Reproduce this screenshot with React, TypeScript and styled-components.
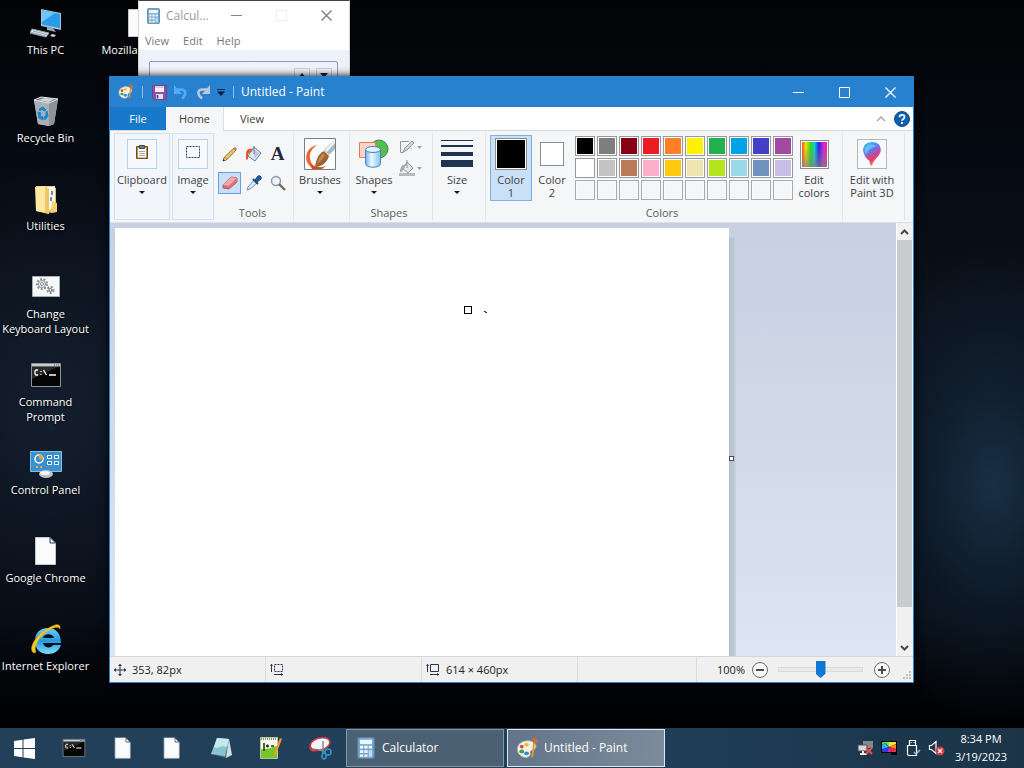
import React from 'react';
import styled, { createGlobalStyle, css } from 'styled-components';

const GlobalStyle = createGlobalStyle`
  *, *::before, *::after { box-sizing: border-box; }
  html, body { margin: 0; padding: 0; }
  body {
    font-family: "Open Sans", "Noto Sans", sans-serif;
    font-size: 12px;
    line-height: 16px;
    color: #1b1b1b;
    overflow: hidden;
  }
  button {
    font: inherit;
    color: inherit;
    margin: 0;
    padding: 0;
    border: 0;
    background: none;
  }
  svg { display: block; flex: none; }
`;

/* ---------- desktop ---------- */

const Screen = styled.div`
  display: flex;
  flex-direction: column;
  height: 100vh;
  background:
    radial-gradient(ellipse 150px 240px at 97% 63%, #182f45 0%, rgba(20, 38, 56, 0.5) 50%, transparent 100%),
    radial-gradient(ellipse 190px 250px at 5% 54%, #141f2f 0%, rgba(17, 26, 40, 0.6) 50%, transparent 100%),
    linear-gradient(#020305 0%, #060a12 20%, #0b121c 45%, #060b13 80%, #010204 92%);
`;

const Desktop = styled.main`
  position: relative;
  flex: 1;
  min-height: 0;
`;

const IconGrid = styled.div`
  display: grid;
  grid-auto-flow: column;
  grid-template-rows: repeat(8, 88px);
  grid-auto-columns: 91px;
  column-gap: 2px;
  justify-content: start;
`;

const Shortcut = styled.button`
  display: flex;
  flex-direction: column;
  align-items: center;
  justify-content: flex-start;
  padding-top: 7px;
  gap: 3px;
  font-size: 11px;
  line-height: 15px;
  color: #fff;
  text-shadow: 0 1px 2px #000;
  white-space: pre;
`;

const WindowFrame = styled.section`
  position: absolute;
  display: flex;
  flex-direction: column;
  background: #fff;
`;

/* ---------- calculator ---------- */

const CalcWindow = styled(WindowFrame)`
  left: 138px;
  top: 0;
  width: 212px;
  height: 240px;
  border: 1px solid #d5d5d5;
  border-top-color: #444;
  color: #777;
`;

const CalcTitle = styled.header`
  display: flex;
  align-items: center;
  height: 29px;
  padding-left: 8px;
`;

const CalcName = styled.h2`
  flex: 1;
  margin: 0 0 0 6px;
  font-size: 12px;
  font-weight: 400;
  color: #999;
`;

const CalcControls = styled.div`
  display: flex;
  button {
    display: grid;
    place-items: center;
    width: 45px;
    height: 28px;
  }
`;

const CalcMenu = styled.nav`
  display: flex;
  gap: 14px;
  height: 20px;
  padding-left: 6px;
  font-size: 11px;
  line-height: 22px;
`;

const CalcBody = styled.div`
  flex: 1;
  padding: 11px 11px 11px 10px;
  background: linear-gradient(#edf2fa, #dde7f3);
`;

const CalcDisplay = styled.div`
  display: flex;
  justify-content: flex-end;
  gap: 6px;
  height: 50px;
  padding: 6px 5px 0;
  border: 1px solid #8e9cb5;
  border-radius: 2px;
  background: linear-gradient(#eef3fb, #fff);
  button {
    display: grid;
    place-items: center;
    width: 16px;
    height: 14px;
    border: 1px solid #ccd4e2;
  }
`;

/* ---------- paint ---------- */

const PaintWindow = styled(WindowFrame)`
  left: 109px;
  right: 110px;
  top: 76px;
  bottom: 45px;
  border: 1px solid #2781cf;
  box-shadow: 0 0 8px #000;
  font-size: 11px;
`;

const TitleBar = styled.header`
  display: flex;
  align-items: center;
  height: 30px;
  flex: none;
  padding-left: 8px;
  background: #2781cf;
  color: #fff;
`;

const QuickAccess = styled.div`
  display: flex;
  align-items: center;
  gap: 6px;
`;

const BarRule = styled.span`
  width: 1px;
  height: 12px;
  margin: 0 3px 0 2px;
  background: #8cbde8;
`;

const PaintName = styled.h1`
  flex: 1;
  margin: 0 0 0 4px;
  font-size: 12px;
  font-weight: 400;
`;

const WindowControls = styled.div`
  display: flex;
  button {
    display: grid;
    place-items: center;
    width: 46px;
    height: 28px;
  }
`;

const TabRow = styled.nav`
  display: flex;
  flex: none;
  height: 24px;
  border-bottom: 1px solid #d6d9dc;
`;

const Tab = styled.button<{ $kind?: 'file' | 'active' }>`
  width: 56px;
  height: 24px;
  line-height: 24px;
  color: #3b3b3b;
  ${p => p.$kind === 'file' && css`
    height: 23px;
    background: #1878ca;
    color: #fff;
  `}
  ${p => p.$kind === 'active' && css`
    width: 58px;
    background: #f5f6f7;
    border-right: 1px solid #dcdfe2;
  `}
`;

const TabTools = styled.div`
  display: flex;
  align-items: center;
  gap: 8px;
  margin-left: auto;
  padding-right: 3px;
`;

const Ribbon = styled.div`
  display: flex;
  flex: none;
  height: 92px;
  padding: 2px 4px;
  background: #f5f6f7;
  border-bottom: 1px solid #dcdfe6;
  color: #3f4043;
`;

const Group = styled.div<{ $width: number }>`
  display: flex;
  flex-direction: column;
  flex: none;
  width: ${p => p.$width}px;
  border-right: 1px solid #e1e4e7;
`;

const GroupBody = styled.div<{ $inset?: number }>`
  display: flex;
  flex: 1;
  padding: 4px 0 0 ${p => p.$inset ?? 0}px;
`;

const GroupName = styled.div`
  height: 14px;
  line-height: 14px;
  padding-right: 4px;
  text-align: center;
  color: #5a5d61;
`;

const BigButton = styled.button<{ $width?: number; $collapsed?: boolean; $pressed?: boolean }>`
  display: flex;
  flex-direction: column;
  align-items: center;
  justify-content: flex-start;
  flex: none;
  width: ${p => p.$width ?? 52}px;
  line-height: 13px;
  white-space: nowrap;
  ${p => p.$collapsed && css`
    height: 87px;
    margin-right: 2px;
    padding-top: 3px;
    border: 1px solid #cddff0;
    background: #f2f6fb;
  `}
  ${p => p.$pressed && css`
    height: 66px;
    margin-top: -2px;
    padding-top: 1px;
    border: 1px solid #7fb0e0;
    background: #c9e0f7;
  `}
`;

const IconSlot = styled.span`
  display: grid;
  place-items: center;
  height: 34px;
  margin-bottom: 2px;
`;

const FramedIcon = styled.span<{ $tone?: string; $raised?: boolean }>`
  display: grid;
  place-items: center;
  width: 30px;
  height: 30px;
  padding-bottom: ${p => (p.$raised ? 5 : 0)}px;
  border: 1px solid ${p => p.$tone ?? '#b5d3ee'};
  background: #f7f9fc;
`;

const Caret = styled.span`
  width: 0;
  height: 0;
  margin-top: 5px;
  border: 3px solid transparent;
  border-top-color: #1b1b1b;
  border-bottom: 0;
`;

const ToolGrid = styled.div`
  display: grid;
  grid-template-columns: repeat(3, 23px);
  grid-auto-rows: 22px;
  align-content: start;
  gap: 7px 1px;
  padding-top: 6px;
`;

const ToolButton = styled.button<{ $on?: boolean }>`
  display: grid;
  place-items: center;
  border: 1px solid ${p => (p.$on ? '#62a2e4' : 'transparent')};
  background: ${p => (p.$on ? '#c9e0f7' : 'transparent')};
`;

const SideTools = styled.div`
  display: flex;
  flex-direction: column;
  gap: 5px;
  padding: 2px 0 0 1px;
`;

const SideTool = styled.button`
  display: flex;
  align-items: center;
  gap: 2px;
`;

const ColorWell = styled.span<{ $size: number; $fill: string }>`
  width: ${p => p.$size}px;
  height: ${p => p.$size}px;
  border: 1px solid #8a8d90;
  background: ${p => p.$fill};
  box-shadow: inset 0 0 0 1px #fff;
`;

const Palette = styled.div`
  display: grid;
  grid-template-columns: repeat(10, 20px);
  grid-auto-rows: 20px;
  gap: 2px;
  margin: -1px 3px 0;
  align-content: start;
`;

const Swatch = styled.button<{ $fill?: string }>`
  border: 1px solid ${p => (p.$fill ? '#97999b' : '#a8aaac')};
  background: ${p => p.$fill ?? '#f5f6f7'};
  box-shadow: inset 0 0 0 1px ${p => (p.$fill ? '#fff' : '#f8f9fa')};
`;

const Rainbow = styled.span`
  width: 29px;
  height: 29px;
  border: 1px solid #8a8d90;
  background:
    linear-gradient(rgba(128, 128, 128, 0) 20%, rgba(128, 128, 128, 0.75)),
    linear-gradient(90deg, #f22, #fd0 17%, #2d2 36%, #1cc 50%, #22e 66%, #d2d 84%, #f26);
  box-shadow: inset 0 0 0 1px #fff;
`;

const Workspace = styled.div`
  display: flex;
  flex: 1;
  min-height: 0;
`;

const Viewport = styled.div`
  display: flex;
  align-items: flex-start;
  flex: 1;
  min-width: 0;
  overflow: hidden;
  padding: 5px 0 0 5px;
  background: linear-gradient(#c7cfe0, #dce5f2);
`;

const Sheet = styled.div`
  position: relative;
  flex: none;
  width: 614px;
  height: 460px;
  background: #fff;
`;

const SheetEdge = styled.div`
  display: flex;
  align-items: center;
  width: 7px;
  height: 450px;
  margin-top: 10px;
  padding-bottom: 9px;
  background: linear-gradient(90deg, #b3bfcc, #bcc7d6 60%, #c9d2e1);
`;

const Handle = styled.span`
  width: 5px;
  height: 5px;
  border: 1px solid #444b5c;
  background: #fff;
`;

const EraserCursor = styled.span`
  position: absolute;
  left: 349px;
  top: 78px;
  width: 8px;
  height: 8px;
  border: 1px solid #000;
  background: #fff;
`;

const PenMark = styled.svg`
  position: absolute;
  left: 369px;
  top: 83px;
`;

const ScrollBar = styled.div`
  display: flex;
  flex-direction: column;
  width: 17px;
  padding-right: 1px;
  border-left: 1px solid #fff;
  background: #f0f0f0;
  button {
    display: grid;
    place-items: center;
    height: 17px;
  }
`;

const ScrollTrack = styled.div`
  flex: 1;
`;

const ScrollThumb = styled.div`
  height: 92%;
  background: #cacbcc;
`;

const StatusBar = styled.footer`
  display: flex;
  flex: none;
  height: 26px;
  border-top: 1px solid #d4d6d9;
  background: #f0f0f0;
  color: #222;
`;

const StatusCell = styled.div<{ $width: number }>`
  display: flex;
  align-items: center;
  gap: 6px;
  flex: 0 1 ${p => p.$width}px;
  padding-left: 4px;
  border-right: 1px solid #dadcde;
`;

const ZoomCell = styled.div`
  display: flex;
  align-items: center;
  flex: 1;
  justify-content: flex-end;
  gap: 7px;
`;

const ZoomRange = styled.input`
  appearance: none;
  width: 85px;
  height: 20px;
  margin: 0 4px 0 3px;
  background: transparent;
  &::-webkit-slider-runnable-track {
    height: 5px;
    border: 1px solid #d8dadc;
    background: #e9eaeb;
  }
  &::-webkit-slider-thumb {
    appearance: none;
    width: 10px;
    height: 17px;
    margin-top: -7px;
    background: #0f78d4;
    clip-path: polygon(0 0, 100% 0, 100% 75%, 50% 100%, 0 75%);
  }
`;

const Grip = styled.svg`
  align-self: flex-end;
  margin: 0 1px 2px 6px;
`;

/* ---------- taskbar ---------- */

const Taskbar = styled.footer`
  display: flex;
  flex: none;
  height: 40px;
  background: linear-gradient(90deg, #22405a, #203f5a 60%, #1b3447);
  color: #fff;
`;

const Launcher = styled.button<{ $width?: number }>`
  display: grid;
  place-items: center;
  width: ${p => p.$width ?? 49}px;
`;

const TaskButton = styled.button<{ $active?: boolean }>`
  display: flex;
  align-items: center;
  gap: 5px;
  flex: 0 1 158px;
  margin: 1px 3px 1px 0;
  padding-left: 8px;
  border: 1px solid ${p => (p.$active ? '#dfe6ec' : '#8496a5')};
  background: ${p => (p.$active ? 'linear-gradient(100deg, #62748a, #7d8c9b)' : '#4b6073')};
`;

const Tray = styled.div`
  display: flex;
  align-items: center;
  gap: 7px;
  margin-left: auto;
`;

const Clock = styled.time`
  width: 58px;
  margin-right: 14px;
  font-size: 11px;
  line-height: 18px;
  text-align: center;
`;

/* ---------- drawings ---------- */

const PcIcon = () => (
  <svg width="32" height="32" viewBox="0 0 32 32">
    <path d="M11 2 31 6v17l-20-4z" fill="#9fc4dd" />
    <path d="M12 3.500 30 7v14L12 17.500z" fill="#2a9be8" />
    <path d="M12 3.500 25 6 12 15z" fill="#6cc5f7" />
    <path d="m17 20 6 1 3 4-9-2z" fill="#93a9b8" />
    <path d="m2 22 17 4-3 4-16-4z" fill="#dfe5ea" stroke="#95a3ae" />
    <path d="m3 24 14 3.500M1.500 25.500 15.500 29" stroke="#9aa7b2" />
    <path d="m22 27 4 1-2 2-4-1z" fill="#cfd8df" />
  </svg>
);

const BinIcon = () => (
  <svg width="32" height="32" viewBox="0 0 32 32">
    <path d="M4 5 11 2l17 2-4 25-5 2-11-2z" fill="#b9c0c5" />
    <path d="m19 8 9-4-4 25-5 2z" fill="#8b9399" />
    <path d="m4 5 15 3v23L8 29z" fill="#a9b0b5" />
    <path d="M4 5 11 2l17 2-9 4z" fill="#727a80" stroke="#e0e4e6" />
    <path d="m8 5 7-2 9 1-5 3z" fill="#d4d6d7" />
    <path d="m9 14 4-2 3 3-2 1-2-2-2 2zM8 17l3 1-1 3 3 1v3l-4-2zM17 16l1 5-3 4-1-3 2-1v-4z" fill="#1686d2" stroke="#1686d2" />
  </svg>
);

const FolderIcon = () => (
  <svg width="32" height="32" viewBox="0 0 32 32">
    <path d="M6 3h14l6 2v24l-8 1-12-2z" fill="#e6bd59" />
    <path d="m16 4 9-1v18l-7 8z" fill="#f8f9f5" />
    <path d="M21 8h2v4h-2zM20 14h2v4h-2z" fill="#75919e" />
    <path d="M5 4 15 3l4 3v25L6 28z" fill="#ffe8a0" />
    <path d="M15 4v26l4 1V6z" fill="#edc76c" />
    <path d="m22 18 5 2v9l-6 1z" fill="#f5d070" />
  </svg>
);

const GearGlyph = ({ x, y, r }: { x: number; y: number; r: number }) => (
  <g transform={`translate(${x} ${y})`} fill="none" stroke="#8a8f93">
    <circle r={r} strokeDasharray="2 1.500" strokeWidth="2" />
    <circle r={r - 1.5} />
    <circle r="1.500" />
  </g>
);

const KeyboardLayoutIcon = () => (
  <svg width="32" height="32" viewBox="0 0 32 32">
    <path d="M2.500 5.500h27v20h-27z" fill="#f6f7f8" stroke="#a9adb0" />
    <GearGlyph x={12} y={13} r={5} />
    <GearGlyph x={20.5} y={19} r={3} />
  </svg>
);

const ConsoleIcon = ({ size = 32 }: { size?: number }) => (
  <svg width={size} height={size} viewBox="0 0 32 32">
    <path d="M1.500 4.500h29v23h-29z" fill="#050505" stroke="#8d9296" />
    <path d="M2 5h28v2.500H2z" fill="#c9cdd0" />
    <path d="M2 8h26L2 20z" fill="#2a2a2a" />
    <path d="M8 11H6l-1 1v3l1 1h2M11 12v1M11 15v1M13.500 11l3 5M19 16h7" fill="none" stroke="#fff" strokeWidth="1.300" />
    <path d="M24 6h1M26 6h1M28 6h1" stroke="#555" />
  </svg>
);

const ControlPanelIcon = () => (
  <svg width="32" height="32" viewBox="0 0 32 32">
    <path d="M.5 4.500h31v20H.5z" fill="#3892d0" stroke="#83bfe5" />
    <ellipse cx="16" cy="27" rx="7" ry="4" fill="#b9c1c7" />
    <ellipse cx="15" cy="26" rx="5" ry="2" fill="#f1f3f4" />
    <circle cx="9" cy="12" r="4" fill="none" stroke="#fff" strokeWidth="1.500" />
    <path d="M9 12V7a5 5 0 0 1 4 6z" fill="#f59b2c" />
    <path d="M17.500 8.500h4v3h-4zM24.500 8.500h4v3h-4zM17.500 14.500h4v3h-4zM24.500 14.500h4v3h-4z" fill="#2378b9" stroke="#fff" />
    <path d="M6 20h2M10 20h2" stroke="#ff9f3f" strokeWidth="2" />
  </svg>
);

const PageIcon = ({ size = 32 }: { size?: number }) => (
  <svg width={size} height={size} viewBox="0 0 32 32">
    <path d="M5.500 2.500H20l5.500 5.500v21.500h-20z" fill="#fafbfc" stroke="#c4c9cd" />
    <path d="M20 2.500V8h5.500z" fill="#fff" stroke="#333b44" />
  </svg>
);

const ExplorerIcon = () => (
  <svg width="32" height="32" viewBox="0 0 32 32">
    <defs>
      <linearGradient id="ie-blue" x1="0" y1="0" x2="0" y2="1">
        <stop offset="0" stopColor="#6fd0f8" />
        <stop offset=".5" stopColor="#1f9be0" />
        <stop offset="1" stopColor="#7fdffb" />
      </linearGradient>
    </defs>
    <path d="M18 5c8 0 13 6 13 15H13c1 5 8 6 10 2h8c-2 6-7 9-13 9C10 31 5 26 5 18S10 5 18 5zm-5 10h11c-1-5-10-5-11 0z" fill="url(#ie-blue)" />
    <path d="M4 30c-6-3 0-15 10-22S31-1 30 6c-1-3-7-2-14 3S3 25 6 29z" fill="#f8c81e" stroke="#e3a713" strokeWidth=".5" />
  </svg>
);

const CalculatorIcon = ({ width = 13, height = 16 }: { width?: number; height?: number }) => (
  <svg width={width} height={height} viewBox="0 0 16 20">
    <rect x=".5" y=".5" width="15" height="19" rx="1.500" fill="#76a6c9" stroke="#4f82a6" />
    <path d="M2.500 2.500h11v4h-11z" fill="#eaf7ff" />
    <path d="M2.500 8h3v2.500h-3zM6.500 8h3v2.500h-3zM10.500 8h3v2.500h-3zM2.500 12h3v2.500h-3zM6.500 12h3v2.500h-3zM2.500 16h3v2h-3zM6.500 16h3v2h-3z" fill="#eef7fc" />
    <path d="M10.500 12h3v6h-3z" fill="#bddcf0" />
  </svg>
);

const PaletteIcon = ({ size = 16 }: { size?: number }) => (
  <svg width={size} height={size} viewBox="0 0 24 24">
    <path d="M2 16C-1 8 7 3 14 4c6 1 8 5 6 8-1 2-4 1-5 3s1 3-1 5c-3 3-10 1-12-4z" fill="#f2f0e5" stroke="#a5adb0" />
    <ellipse cx="6" cy="15" rx="2.500" ry="2" fill="#3da148" />
    <ellipse cx="6" cy="10" rx="2" ry="2" fill="#e3473a" />
    <ellipse cx="11" cy="8" rx="2.300" ry="1.800" fill="#f0b92d" />
    <ellipse cx="11" cy="17" rx="2.500" ry="2" fill="#358bd5" />
    <path d="M20 5 18 21h-2L18 5z" fill="#e8982e" />
    <path d="m17 1 3-1 3 4-2 3-3-1z" fill="#c96d35" />
  </svg>
);

const SaveIcon = () => (
  <svg width="15" height="15" viewBox="0 0 15 15">
    <path d="M.5.5h14v14H2l-1.500-1.500z" fill="#8456a5" stroke="#70448f" />
    <path d="M3 1h9v6H3z" fill="#f8eef8" />
    <path d="M3 2h9" stroke="#e98fbb" />
    <path d="M4 9h7v5H4z" fill="#e5def0" />
    <path d="M5.500 10v3.500" stroke="#59337a" strokeWidth="1.500" />
  </svg>
);

const UndoIcon = () => (
  <svg width="16" height="16" viewBox="0 0 16 16">
    <path d="M4 5.500h4c5 0 6 5 1 9" fill="none" stroke="#56aaf1" strokeWidth="2.600" />
    <path d="M1 1v9h8z" fill="#56aaf1" />
  </svg>
);

const RedoIcon = () => (
  <svg width="16" height="16" viewBox="0 0 16 16">
    <path d="M12 5.500H8c-6 0-6 5-1 9" fill="none" stroke="#b5c9db" strokeWidth="2.600" />
    <path d="M15 1v9H7z" fill="#b5c9db" />
  </svg>
);

const QuickMenuIcon = () => (
  <svg width="8" height="8" viewBox="0 0 8 8">
    <path d="M0 1.500h8" stroke="#0b2c52" />
    <path d="M0 3.500h8L4 8z" fill="#071c38" />
  </svg>
);

const Minimize = ({ color }: { color: string }) => (
  <svg width="11" height="11"><path d="M0 5.500h11" stroke={color} /></svg>
);
const Maximize = ({ color }: { color: string }) => (
  <svg width="11" height="11"><path d="M.5.500h10v10H.5z" fill="none" stroke={color} /></svg>
);
const CloseGlyph = ({ color }: { color: string }) => (
  <svg width="11" height="11"><path d="m.5.500 10 10M10.500.500l-10 10" stroke={color} strokeWidth="1.200" /></svg>
);

const HelpIcon = () => (
  <svg width="16" height="16" viewBox="0 0 16 16">
    <circle cx="8" cy="8" r="7.500" fill="#0f5eb0" stroke="#0a4a90" />
    <path d="M5.500 6.300C5.500 3 10.500 3 10.500 6c0 2-2.500 1.800-2.500 3.800M8 11v2" fill="none" stroke="#fff" strokeWidth="1.800" />
  </svg>
);

const ClipboardIcon = () => (
  <svg width="16" height="16" viewBox="0 0 16 16">
    <path d="M2.500 2.500h11v12h-11z" fill="#b98a45" stroke="#6d4d22" />
    <path d="M4 4h8v9.500H4z" fill="#fff" />
    <path d="M5.500 1.500h5v3h-5z" fill="#777" stroke="#454545" />
    <path d="M5 7.500h6M5 9.500h6M5 11.500h6" stroke="#a2a7ad" />
  </svg>
);

const SelectIcon = () => (
  <svg width="16" height="14" viewBox="0 0 16 14">
    <path d="M1.500 1.500h13v11h-13z" fill="none" stroke="#1e3e6b" strokeDasharray="2 1" />
  </svg>
);

const PencilIcon = () => (
  <svg width="16" height="16" viewBox="0 0 16 16">
    <path d="m1 15 1.500-4L12 2l2 2-9 9.500z" fill="#f4c255" stroke="#775a31" strokeWidth=".8" />
    <path d="m2.500 11 2.500 2.500L1 15z" fill="#f3ddb0" stroke="#705437" strokeWidth=".6" />
    <path d="m1 15 .5-2 1.500 1.500z" fill="#222" />
    <path d="m11.500 2.500 1.500-1.500 2 2-1.500 1.500z" fill="#c46d5c" />
  </svg>
);

const BucketIcon = () => (
  <svg width="18" height="18" viewBox="0 0 18 18">
    <path d="m9 2 7 6-6 8-7-5z" fill="#dfeaf5" stroke="#67809c" />
    <path d="m9 4 5 4-4 6-1-5z" fill="#b1c9e3" />
    <path d="M9 9V1" stroke="#687a8e" />
    <path d="M8 4C4 3 1 4 1 9v6l2-1V9l4-3z" fill="#e65a2f" />
  </svg>
);

const LetterTool = styled.span`
  font-family: "Liberation Serif", serif;
  font-size: 19px;
  line-height: 20px;
  font-weight: 700;
  color: #1f2c40;
`;

const EraserIcon = () => (
  <svg width="18" height="18" viewBox="0 0 18 18">
    <path d="M2 11 10 3l6 1v4l-8 7-6-1z" fill="#d67177" stroke="#b25b61" />
    <path d="m2 11 8-8 6 1-8 8z" fill="#f3a7a7" />
    <path d="m8 12 8-8v4l-8 7z" fill="#d9727a" />
  </svg>
);

const PickerIcon = () => (
  <svg width="16" height="16" viewBox="0 0 16 16">
    <path d="m8 5 3 3-7 6-3 1 1-3z" fill="#d7eaf7" stroke="#7b93a8" />
    <path d="m7 4 5 5" stroke="#204a78" strokeWidth="2" />
    <path d="m9 5 3-4c2-1 4 1 3 3l-4 3z" fill="#1f5e9f" stroke="#163f70" />
  </svg>
);

const MagnifierIcon = () => (
  <svg width="16" height="16" viewBox="0 0 16 16">
    <circle cx="6" cy="6" r="4.500" fill="#e9f3fa" stroke="#929aa3" strokeWidth="1.500" />
    <path d="m9 9 6 6" stroke="#6a6c70" strokeWidth="2.400" />
  </svg>
);

const BrushIcon = () => (
  <svg width="32" height="32" viewBox="0 0 32 32">
    <path d="M.5.5h31v31H.5z" fill="#fbfcfc" stroke="#777f85" />
    <path d="M13 7C3 9-1 20 5 27c3 4 8 4 13 2-4 0-9 0-11-5C4 17 7 11 13 7z" fill="#ed6431" />
    <path d="M31 1v10l-6 6-5-5z" fill="#aab7c2" />
    <path d="m31 1-10 11 2 2 8-9z" fill="#edf3f5" />
    <path d="m20 13 5 5c-2 7-8 11-14 11 1-7 3-13 9-16z" fill="#9b6432" />
    <path d="m19 15 2 2c-2 4-5 7-8 9 1-4 3-8 6-11z" fill="#bf8752" />
    <path d="M6 26c5 4 10 4 16 2l-4 3H8z" fill="#d44b22" />
  </svg>
);

const ShapesIcon = () => (
  <svg width="30" height="30" viewBox="0 0 30 30">
    <defs>
      <linearGradient id="cylinder"><stop stopColor="#6db2f0" /><stop offset=".4" stopColor="#eef8ff" /><stop offset="1" stopColor="#85c1f5" /></linearGradient>
    </defs>
    <circle cx="20" cy="10" r="9" fill="#58bd51" stroke="#31933a" />
    <path d="M.5 3.500h16v15H.5z" fill="#f9d5c9" stroke="#e87850" />
    <path d="M6.500 10.500v14c0 5 15 5 15 0v-14z" fill="url(#cylinder)" stroke="#4b86be" />
    <ellipse cx="14" cy="10.500" rx="7.500" ry="3" fill="#e2f2ff" stroke="#4b86be" />
  </svg>
);

const OutlineIcon = () => (
  <svg width="16" height="16" viewBox="0 0 16 16">
    <path d="M10 2.500H1.500v11h3M12 9v1" fill="none" stroke="#92969b" />
    <path d="m4 13 2-4 7-7 2 2-7 7z" fill="#d5d7da" stroke="#8e9297" />
  </svg>
);

const FillIcon = () => (
  <svg width="16" height="16" viewBox="0 0 16 16">
    <path d="M0 13h16v3H0z" fill="#b5b9c0" />
    <path d="m8 2 6 6-5 5-5-4z" fill="#e5e7ea" stroke="#8e9297" />
    <path d="M8 8V0" stroke="#8e9297" />
    <path d="M8 4C4 4 1 6 1 12h2l2-4z" fill="#a7abb3" />
  </svg>
);

const SmallCaret = () => <svg width="5" height="3"><path d="M0 0h5L2.500 3z" fill="#a0a3a7" /></svg>;

const SizeIcon = () => (
  <svg width="32" height="28" viewBox="0 0 32 28">
    <path d="M0 0h32v1H0zM0 5h32v2H0zM0 12h32v4H0zM0 20h32v7H0z" fill="#1e3450" />
  </svg>
);

const Paint3dIcon = () => (
  <svg width="20" height="24" viewBox="0 0 20 24">
    <defs>
      <linearGradient id="drop" x1=".2" y1="0" x2=".7" y2="1">
        <stop stopColor="#2ac6f1" /><stop offset=".4" stopColor="#7471e7" /><stop offset=".7" stopColor="#e63978" /><stop offset="1" stopColor="#fbb436" />
      </linearGradient>
    </defs>
    <path d="M10 0c8 0 11 7 7 13-3 4-6 6-7 11-2-1-3-3-2-5-3-2-6-6-7-10C1 3 5 0 10 0z" fill="url(#drop)" />
    <path d="M3 7C5 2 12 1 14 5c-5 0-8 2-9 7-2-1-3-3-2-5z" fill="#68d7f7" opacity=".7" />
    <path d="M2 13c4 3 9 1 12 0-2 4-4 5-5 7-1-1-5-3-7-7z" fill="#ef3e58" opacity=".6" />
  </svg>
);

const MoveIcon = () => (
  <svg width="12" height="12" viewBox="0 0 12 12">
    <path d="M0 6h12M6 0v12" stroke="#26374c" />
    <path d="m4 2 2-2 2 2zM4 10l2 2 2-2zM2 4 0 6l2 2zM10 4l2 2-2 2z" fill="#26374c" />
  </svg>
);

const DimensionIcon = ({ dashed }: { dashed?: boolean }) => (
  <svg width="14" height="13" viewBox="0 0 14 13">
    <path d="M4.500 1.500h8v7h-8z" fill="none" stroke="#26374c" strokeDasharray={dashed ? '2 1' : undefined} />
    <path d="M1.500 1v8M4 11.500h9" stroke="#26374c" />
    <path d="m0 3 1.500-2L3 3zM11 10l2 1.500-2 1.500z" fill="#26374c" />
  </svg>
);

const ZoomGlyph = ({ plus }: { plus?: boolean }) => (
  <svg width="16" height="16" viewBox="0 0 16 16">
    <circle cx="8" cy="8" r="7.500" fill="#f9f9f9" stroke="#686b6e" />
    <path d={plus ? 'M4 8h8M8 4v8' : 'M4 8h8'} stroke="#4a4d50" strokeWidth="2" />
  </svg>
);

const ScrollArrow = ({ down }: { down?: boolean }) => (
  <svg width="9" height="6" viewBox="0 0 9 6">
    <path d={down ? 'm1 1 3.500 3.500L8 1' : 'm1 5 3.500-3.500L8 5'} fill="none" stroke="#46494c" strokeWidth="2" />
  </svg>
);

const WindowsIcon = () => (
  <svg width="21" height="21" viewBox="0 0 21 21">
    <path d="m0 3 8.500-1.200V10H0zM9.500 1.600 21 0v10H9.500zM0 11h8.500v8.200L0 18zM9.500 11H21v10L9.500 19.400z" fill="#fff" />
  </svg>
);

const NotepadIcon = () => (
  <svg width="24" height="24" viewBox="0 0 24 24">
    <path d="m8 2 12 1 2 15-5 4-15-4z" fill="#4f7684" />
    <path d="M8 2 20 3l-4 17-14-2z" fill="#8cc3d0" />
    <path d="m8 2 12 1-2 8C12 8 9 14 5 11z" fill="#c3e8ee" />
    <path d="m20 3 3 16-6 3z" fill="#d3dee0" />
  </svg>
);

const EditorIcon = () => (
  <svg width="24" height="24" viewBox="0 0 24 24">
    <path d="M2.500 1.500h17v21h-17z" fill="#f7fae8" stroke="#b7c69a" />
    <path d="M3 13c7 1 10-2 16-3v12H3z" fill="#77c62c" />
    <path d="M3 3h16" stroke="#838d80" strokeDasharray="1 1" strokeWidth="2" />
    <path d="M6 7v8M8 10h3M9.500 8.500v3M13 10h3" stroke="#17310d" strokeWidth="1.500" />
    <path d="m22 2 2 1-6 15-2 2v-3z" fill="#f19a2b" />
  </svg>
);

const SnipIcon = () => (
  <svg width="25" height="24" viewBox="0 0 25 24">
    <ellipse cx="12" cy="8" rx="10" ry="6" transform="rotate(-15 12 8)" fill="#f5f6f7" stroke="#d33b40" strokeWidth="1.500" />
    <path d="m5 13 11 2M15 5l0 12" stroke="#7d8c99" strokeWidth="1.500" />
    <circle cx="20" cy="16" r="3" fill="none" stroke="#2e97c8" strokeWidth="1.600" />
    <ellipse cx="16" cy="20" rx="2" ry="3" fill="none" stroke="#2e97c8" strokeWidth="1.600" />
    <path d="M2 11c0 5 5 4 8 3" fill="none" stroke="#d33b40" strokeWidth="1.500" />
  </svg>
);

const NetworkIcon = () => (
  <svg width="17" height="16" viewBox="0 0 17 16">
    <path d="M6 1h10v7H6z" fill="#85888b" />
    <path d="M1 5h9v6H1z" fill="#d6d8da" stroke="#4b4f53" />
    <path d="M3 14h7M6 11v3" stroke="#eee" strokeWidth="2" />
    <path d="m9 8 6 6M15 8l-6 6" stroke="#eb4c44" strokeWidth="2" />
  </svg>
);

const DisplayIcon = () => (
  <svg width="17" height="16" viewBox="0 0 17 16">
    <path d="M0 1h16v12H0z" fill="#080808" />
    <path d="M1 2h7L1 5z" fill="#2fd45c" />
    <path d="M8 7 8 2h7v2z" fill="#f0e53a" />
    <path d="M8 7 4 2h4z" fill="#8be03c" />
    <path d="M8 7 15 4v5z" fill="#f58a26" />
    <path d="M8 7 15 9v3h-4z" fill="#ea2f38" />
    <path d="M8 7 11 12H6z" fill="#e01fc5" />
    <path d="M8 7 6 12H1V9z" fill="#2b3ef0" />
    <path d="M8 7 1 9V5l3-2z" fill="#22b8ee" />
    <path d="M10 13h6v2h-6z" fill="#080808" />
  </svg>
);

const UsbIcon = () => (
  <svg width="16" height="18" viewBox="0 0 16 18">
    <path d="M4.500 1.500h6v5h-6zM2.500 6.500h9v10h-8l-1-1z" fill="none" stroke="#fff" strokeWidth="1.200" />
    <path d="M6 3v1M9 3v1" stroke="#fff" />
    <path d="m9 13 2 2 4-4" fill="none" stroke="#a9b9c5" strokeWidth="1.500" />
  </svg>
);

const VolumeIcon = () => (
  <svg width="17" height="16" viewBox="0 0 17 16">
    <path d="M1.500 5.500h2L8 1.500v12l-4.500-4h-2z" fill="none" stroke="#fff" strokeWidth="1.200" />
    <circle cx="12" cy="11" r="4.500" fill="#cf3b41" />
    <path d="m10 9 4 4M14 9l-4 4" stroke="#fff" strokeWidth="1.200" />
  </svg>
);

/* ---------- data ---------- */

const shortcuts = [
  { label: 'This PC', icon: <PcIcon /> },
  { label: 'Recycle Bin', icon: <BinIcon /> },
  { label: 'Utilities', icon: <FolderIcon /> },
  { label: 'Change\nKeyboard Layout', icon: <KeyboardLayoutIcon /> },
  { label: 'Command\nPrompt', icon: <ConsoleIcon /> },
  { label: 'Control Panel', icon: <ControlPanelIcon /> },
  { label: 'Google Chrome', icon: <PageIcon /> },
  { label: 'Internet Explorer', icon: <ExplorerIcon /> },
  { label: 'Mozilla Firefox', icon: <PageIcon /> },
];

const paletteColors: (string | undefined)[] = [
  '#000000', '#7f7f7f', '#880015', '#ed1c24', '#ff7f27', '#fff200', '#22b14c', '#00a2e8', '#4340c8', '#a349a4',
  '#ffffff', '#c3c3c3', '#b97a57', '#ffaec9', '#ffc90e', '#efe4b0', '#b5e61d', '#99d9ea', '#7092be', '#c8bfe7',
  ...Array(10).fill(undefined),
];

export default function App() {
  return (
    <Screen>
      <GlobalStyle />
      <Desktop>
        <IconGrid>
          {shortcuts.map(s => (
            <Shortcut key={s.label}>{s.icon}<span>{s.label}</span></Shortcut>
          ))}
        </IconGrid>

        <CalcWindow aria-label="Calculator">
          <CalcTitle>
            <CalculatorIcon />
            <CalcName>Calcul...</CalcName>
            <CalcControls>
              <button aria-label="Minimize"><Minimize color="#888" /></button>
              <button aria-label="Maximize"><Maximize color="#eceef5" /></button>
              <button aria-label="Close"><CloseGlyph color="#777" /></button>
            </CalcControls>
          </CalcTitle>
          <CalcMenu><button>View</button><button>Edit</button><button>Help</button></CalcMenu>
          <CalcBody>
            <CalcDisplay>
              <button aria-label="Previous"><svg width="8" height="5"><path d="M0 5h8L4 0z" fill="#17233a" /></svg></button>
              <button aria-label="Next"><svg width="8" height="5"><path d="M0 0h8L4 5z" fill="#17233a" /></svg></button>
            </CalcDisplay>
          </CalcBody>
        </CalcWindow>

        <PaintWindow aria-label="Paint">
          <TitleBar>
            <QuickAccess>
              <PaletteIcon />
              <BarRule />
              <button aria-label="Save"><SaveIcon /></button>
              <button aria-label="Undo"><UndoIcon /></button>
              <button aria-label="Redo"><RedoIcon /></button>
              <button aria-label="Customize toolbar"><QuickMenuIcon /></button>
              <BarRule />
            </QuickAccess>
            <PaintName>Untitled - Paint</PaintName>
            <WindowControls>
              <button aria-label="Minimize"><Minimize color="#fff" /></button>
              <button aria-label="Maximize"><Maximize color="#fff" /></button>
              <button aria-label="Close"><CloseGlyph color="#fff" /></button>
            </WindowControls>
          </TitleBar>

          <TabRow>
            <Tab $kind="file">File</Tab>
            <Tab $kind="active">Home</Tab>
            <Tab>View</Tab>
            <TabTools>
              <button aria-label="Collapse ribbon">
                <svg width="10" height="6"><path d="m1 5 4-4 4 4" fill="none" stroke="#a3a6a9" strokeWidth="1.300" /></svg>
              </button>
              <button aria-label="Help"><HelpIcon /></button>
            </TabTools>
          </TabRow>

          <Ribbon>
            <BigButton $collapsed $width={56}>
              <IconSlot><FramedIcon $raised><ClipboardIcon /></FramedIcon></IconSlot>
              Clipboard<Caret />
            </BigButton>
            <BigButton $collapsed $width={42}>
              <IconSlot><FramedIcon $raised><SelectIcon /></FramedIcon></IconSlot>
              Image<Caret />
            </BigButton>
            <Group $width={78}>
              <GroupBody $inset={2}>
                <ToolGrid>
                  <ToolButton aria-label="Pencil"><PencilIcon /></ToolButton>
                  <ToolButton aria-label="Fill with color"><BucketIcon /></ToolButton>
                  <ToolButton aria-label="Text"><LetterTool>A</LetterTool></ToolButton>
                  <ToolButton aria-label="Eraser" $on><EraserIcon /></ToolButton>
                  <ToolButton aria-label="Color picker"><PickerIcon /></ToolButton>
                  <ToolButton aria-label="Magnifier"><MagnifierIcon /></ToolButton>
                </ToolGrid>
              </GroupBody>
              <GroupName>Tools</GroupName>
            </Group>
            <Group $width={56}>
              <GroupBody>
                <BigButton><IconSlot><BrushIcon /></IconSlot>Brushes<Caret /></BigButton>
              </GroupBody>
            </Group>
            <Group $width={83}>
              <GroupBody>
                <BigButton $width={48}><IconSlot><ShapesIcon /></IconSlot>Shapes<Caret /></BigButton>
                <SideTools>
                  <SideTool aria-label="Shape outline"><OutlineIcon /><SmallCaret /></SideTool>
                  <SideTool aria-label="Shape fill"><FillIcon /><SmallCaret /></SideTool>
                </SideTools>
              </GroupBody>
              <GroupName>Shapes</GroupName>
            </Group>
            <Group $width={53}>
              <GroupBody>
                <BigButton $width={48}><IconSlot><SizeIcon /></IconSlot>Size<Caret /></BigButton>
              </GroupBody>
            </Group>
            <Group $width={357}>
              <GroupBody $inset={4}>
                <BigButton $width={42} $pressed>
                  <IconSlot><ColorWell $size={32} $fill="#000" /></IconSlot>
                  <span>Color<br />1</span>
                </BigButton>
                <BigButton $width={40}>
                  <IconSlot><ColorWell $size={24} $fill="#fff" /></IconSlot>
                  <span>Color<br />2</span>
                </BigButton>
                <Palette>
                  {paletteColors.map((c, i) => (
                    <Swatch key={i} $fill={c} aria-label={c ? `Color ${c}` : 'Empty color'} />
                  ))}
                </Palette>
                <BigButton $width={36}>
                  <IconSlot><Rainbow /></IconSlot>
                  <span>Edit<br />colors</span>
                </BigButton>
              </GroupBody>
              <GroupName>Colors</GroupName>
            </Group>
            <Group $width={62}>
              <GroupBody>
                <BigButton $width={58}>
                  <IconSlot><FramedIcon $tone="#b5b8bb"><Paint3dIcon /></FramedIcon></IconSlot>
                  <span>Edit with<br />Paint 3D</span>
                </BigButton>
              </GroupBody>
            </Group>
          </Ribbon>

          <Workspace>
            <Viewport>
              <Sheet>
                <EraserCursor />
                <PenMark width="4" height="3"><path d="M0 .5h1.500v1H3" stroke="#222" fill="none" /></PenMark>
              </Sheet>
              <SheetEdge><Handle /></SheetEdge>
            </Viewport>
            <ScrollBar>
              <button aria-label="Scroll up"><ScrollArrow /></button>
              <ScrollTrack><ScrollThumb /></ScrollTrack>
              <button aria-label="Scroll down"><ScrollArrow down /></button>
            </ScrollBar>
          </Workspace>

          <StatusBar>
            <StatusCell $width={156}><MoveIcon />353, 82px</StatusCell>
            <StatusCell $width={156}><DimensionIcon dashed /></StatusCell>
            <StatusCell $width={156}><DimensionIcon />614 × 460px</StatusCell>
            <StatusCell $width={119} />
            <ZoomCell>
              <label htmlFor="zoom">100%</label>
              <button aria-label="Zoom out"><ZoomGlyph /></button>
              <ZoomRange id="zoom" type="range" min="0" max="100" defaultValue="50" />
              <button aria-label="Zoom in"><ZoomGlyph plus /></button>
              <Grip width="9" height="9"><path d="M6 0h2v2H6zM3 3h2v2H3zM6 3h2v2H6zM0 6h2v2H0zM3 6h2v2H3zM6 6h2v2H6z" fill="#c0c2c4" /></Grip>
            </ZoomCell>
          </StatusBar>
        </PaintWindow>
      </Desktop>

      <Taskbar>
        <Launcher aria-label="Start"><WindowsIcon /></Launcher>
        <Launcher aria-label="Command Prompt"><ConsoleIcon size={24} /></Launcher>
        <Launcher aria-label="Google Chrome"><PageIcon size={24} /></Launcher>
        <Launcher aria-label="Mozilla Firefox"><PageIcon size={24} /></Launcher>
        <Launcher aria-label="Notepad"><NotepadIcon /></Launcher>
        <Launcher aria-label="Notepad++"><EditorIcon /></Launcher>
        <Launcher aria-label="Snipping Tool" $width={52}><SnipIcon /></Launcher>
        <TaskButton><CalculatorIcon width={22} height={22} />Calculator</TaskButton>
        <TaskButton $active><PaletteIcon size={23} />Untitled - Paint</TaskButton>
        <Tray>
          <NetworkIcon />
          <DisplayIcon />
          <UsbIcon />
          <VolumeIcon />
          <Clock>8:34 PM<br />3/19/2023</Clock>
        </Tray>
      </Taskbar>
    </Screen>
  );
}
